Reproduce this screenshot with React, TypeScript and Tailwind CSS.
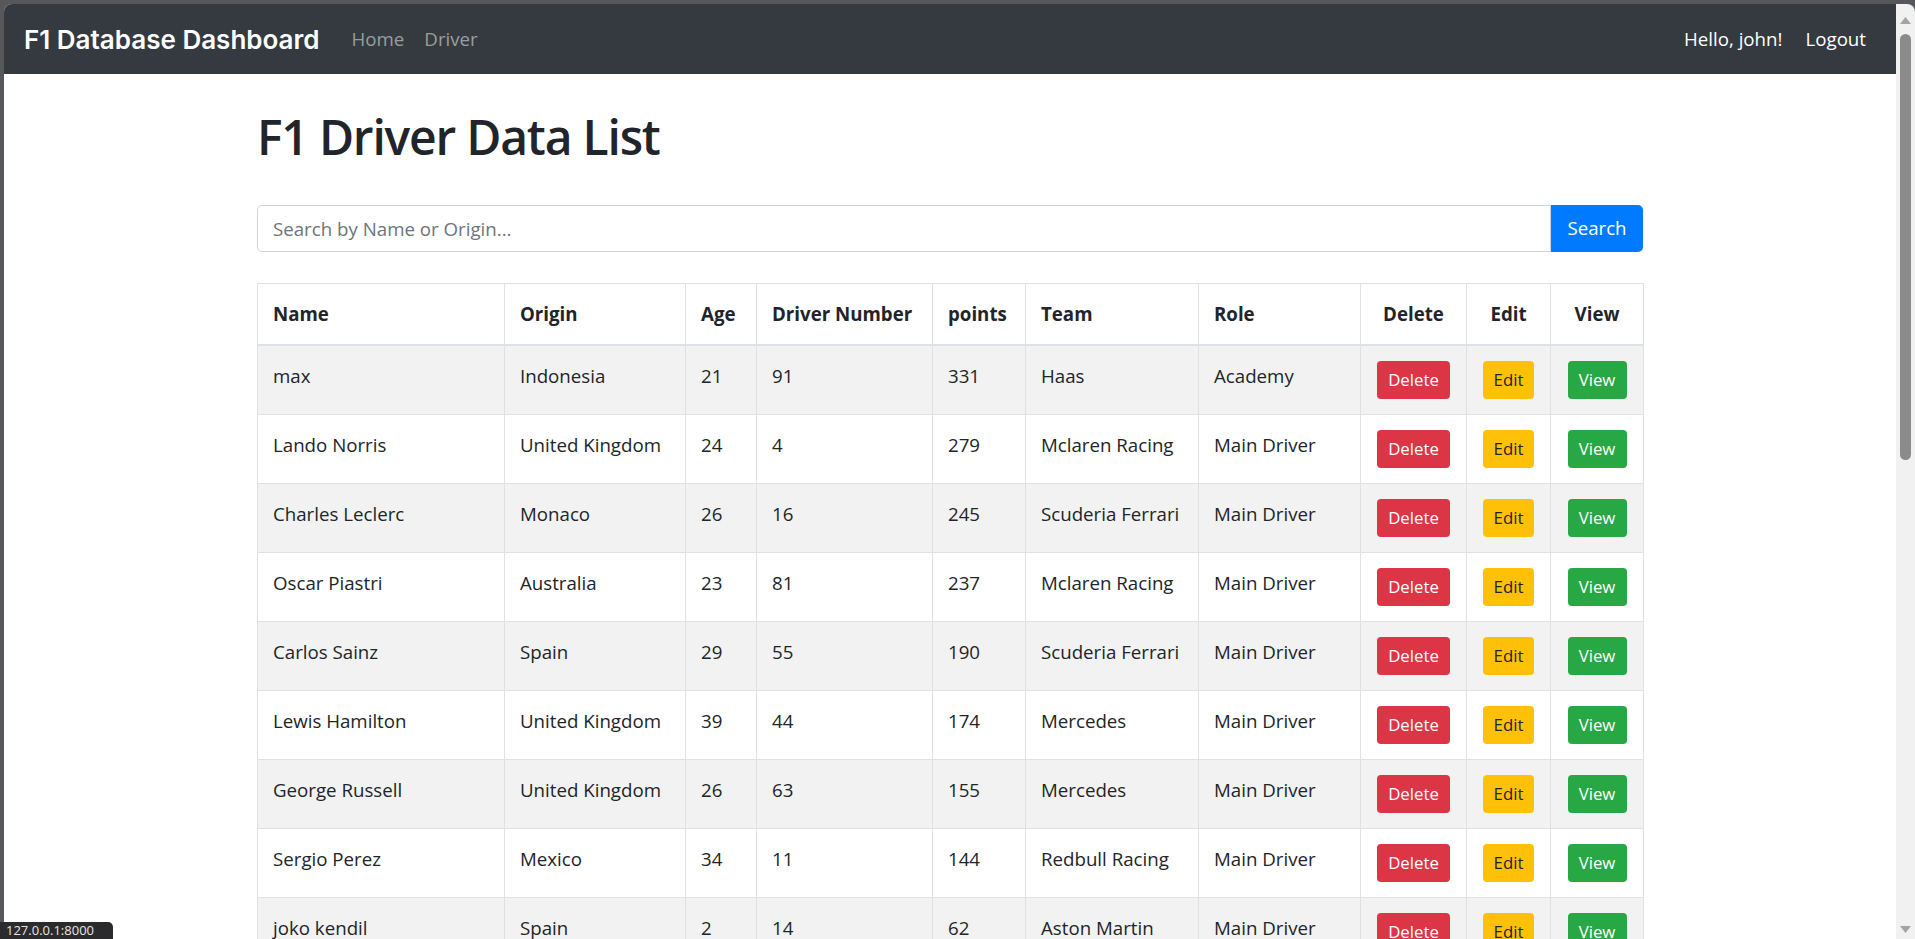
import React from 'react'

type Driver = {
  name: string
  origin: string
  age: number
  number: number
  points: number
  team: string
  role: string
}

const drivers: Driver[] = [
  { name: 'max', origin: 'Indonesia', age: 21, number: 91, points: 331, team: 'Haas', role: 'Academy' },
  { name: 'Lando Norris', origin: 'United Kingdom', age: 24, number: 4, points: 279, team: 'Mclaren Racing', role: 'Main Driver' },
  { name: 'Charles Leclerc', origin: 'Monaco', age: 26, number: 16, points: 245, team: 'Scuderia Ferrari', role: 'Main Driver' },
  { name: 'Oscar Piastri', origin: 'Australia', age: 23, number: 81, points: 237, team: 'Mclaren Racing', role: 'Main Driver' },
  { name: 'Carlos Sainz', origin: 'Spain', age: 29, number: 55, points: 190, team: 'Scuderia Ferrari', role: 'Main Driver' },
  { name: 'Lewis Hamilton', origin: 'United Kingdom', age: 39, number: 44, points: 174, team: 'Mercedes', role: 'Main Driver' },
  { name: 'George Russell', origin: 'United Kingdom', age: 26, number: 63, points: 155, team: 'Mercedes', role: 'Main Driver' },
  { name: 'Sergio Perez', origin: 'Mexico', age: 34, number: 11, points: 144, team: 'Redbull Racing', role: 'Main Driver' },
  { name: 'joko kendil', origin: 'Spain', age: 2, number: 14, points: 62, team: 'Aston Martin', role: 'Main Driver' },
  { name: 'Valtteri Bottas', origin: 'Finland', age: 34, number: 77, points: 0, team: 'Kick Sauber', role: 'Main Driver' },
]

const cell = 'border border-[#dee2e6] p-[15px] align-top whitespace-nowrap'

const Navbar = () => (
  <nav className="flex h-[70px] shrink-0 items-center bg-[#343a40] px-[20px]">
    <span className="mr-[22px] font-['Inter',sans-serif] text-[26px] font-semibold text-white">
      F1 Database Dashboard
    </span>
    <a className="px-[10px] text-[18.7px] text-[#9a9da0]">Home</a>
    <a className="px-[10px] text-[18.7px] text-[#9a9da0]">Driver</a>
    <div className="ml-auto flex items-center">
      <span className="mr-[13px] text-[18.7px] text-white">Hello, john!</span>
      <a className="px-[10px] text-[18.7px] text-white">Logout</a>
    </div>
  </nav>
)

const Btn = ({ text, className }: { text: string; className: string }) => (
  <div className="flex justify-center">
    <button className={`flex h-[38px] items-center justify-center rounded-[4px] text-[16.8px] ${className}`}>
      {text}
    </button>
  </div>
)

const DriverTable = () => (
  <table className="mt-[31px] w-full table-fixed border-collapse text-[18.7px] leading-[30px] text-[#212529]">
    <colgroup>
      <col className="w-[247px]" />
      <col className="w-[181px]" />
      <col className="w-[71px]" />
      <col className="w-[176px]" />
      <col className="w-[93px]" />
      <col className="w-[173px]" />
      <col className="w-[162px]" />
      <col className="w-[106px]" />
      <col className="w-[84px]" />
      <col className="w-[93px]" />
    </colgroup>
    <thead>
      <tr className="text-left font-bold">
        <th className={`${cell} border-b-2`}>Name</th>
        <th className={`${cell} border-b-2`}>Origin</th>
        <th className={`${cell} border-b-2`}>Age</th>
        <th className={`${cell} border-b-2`}>Driver Number</th>
        <th className={`${cell} border-b-2`}>points</th>
        <th className={`${cell} border-b-2`}>Team</th>
        <th className={`${cell} border-b-2`}>Role</th>
        <th className={`${cell} border-b-2 text-center`}>Delete</th>
        <th className={`${cell} border-b-2 text-center`}>Edit</th>
        <th className={`${cell} border-b-2 text-center`}>View</th>
      </tr>
    </thead>
    <tbody>
      {drivers.map((d, i) => (
        <tr key={d.name} className={i % 2 === 0 ? 'bg-[#f2f2f2]' : 'bg-white'}>
          <td className={cell}>{d.name}</td>
          <td className={cell}>{d.origin}</td>
          <td className={cell}>{d.age}</td>
          <td className={cell}>{d.number}</td>
          <td className={cell}>{d.points}</td>
          <td className={cell}>{d.team}</td>
          <td className={cell}>{d.role}</td>
          <td className={cell}>
            <Btn text="Delete" className="w-[73px] bg-[#dc3545] text-white" />
          </td>
          <td className={cell}>
            <Btn text="Edit" className="w-[51px] bg-[#ffc107] text-[#212529]" />
          </td>
          <td className={cell}>
            <Btn text="View" className="w-[59px] bg-[#28a745] text-white" />
          </td>
        </tr>
      ))}
    </tbody>
  </table>
)

const Scrollbar = () => (
  <div className="flex w-[19px] shrink-0 flex-col items-center rounded-tr-[8px] bg-[#f1f1f1]">
    <svg width="11" height="7" viewBox="0 0 11 7" className="mt-[13px]">
      <path d="M5.5 0 L11 7 L0 7 Z" fill="#a3a3a3" />
    </svg>
    <div className="mt-[10px] h-[426px] w-[11px] rounded-full bg-[#8b8b8b]" />
    <div className="flex-1" />
    <svg width="11" height="7" viewBox="0 0 11 7" className="mb-[6px]">
      <path d="M0 0 L11 0 L5.5 7 Z" fill="#a3a3a3" />
    </svg>
  </div>
)

export default function App() {
  return (
    <div className="relative flex h-[939px] w-[1915px] flex-col overflow-hidden bg-[#56575b] pt-[4px] font-['Open_Sans',sans-serif]">
      <div className="flex min-h-0 flex-1 pl-[4px]">
        <div className="flex min-w-0 flex-1 flex-col overflow-hidden rounded-tl-[8px] bg-white">
          <Navbar />
          <main className="mx-auto w-[1386px] pt-[34px]">
            <h1 className="mb-[10px] text-[48px] font-semibold leading-[1.2] tracking-[-0.025em] text-[#212529]">
              F1 Driver Data List
            </h1>
            <form className="mt-[39px] flex" onSubmit={(e) => e.preventDefault()}>
              <input
                type="text"
                placeholder="Search by Name or Origin..."
                className="h-[47px] flex-1 rounded-l-[5px] border border-[#ced4da] px-[15px] text-[18.7px] text-[#495057] placeholder:text-[#6c757d]"
              />
              <button type="submit" className="h-[47px] w-[92px] rounded-r-[5px] bg-[#007bff] text-[18.7px] text-white">
                Search
              </button>
            </form>
            <DriverTable />
          </main>
        </div>
        <Scrollbar />
      </div>
      <div className="absolute bottom-0 left-0 h-[17px] w-[113px] rounded-tr-[5px] bg-[#2b2b2d] pl-[6px] text-[13px] leading-[17px] text-[#e6e6e6]">
        127.0.0.1:8000
      </div>
    </div>
  )
}
